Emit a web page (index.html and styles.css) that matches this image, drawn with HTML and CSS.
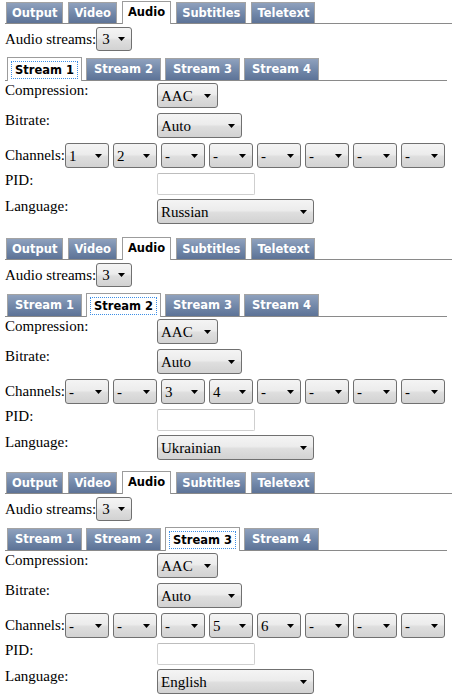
FILE: index.html
```html
<!DOCTYPE html>
<html>
<head>
<meta charset="utf-8">
<title>Audio settings</title>
<link rel="stylesheet" href="styles.css">
</head>
<body>
<div class="page">

  <section class="panel">
    <div class="tabs tabs-main">
      <span class="tab">Output</span>
      <span class="tab">Video</span>
      <span class="tab tab-active">Audio</span>
      <span class="tab">Subtitles</span>
      <span class="tab">Teletext</span>
    </div>
    <div class="count-row">
      <span class="inline-label">Audio streams:</span>
      <span class="sel sel-count"><span class="sel-text">3</span><svg class="arrow" viewBox="0 0 7 4"><polygon points="0,0 7,0 3.5,4"/></svg></span>
    </div>
    <div class="tabs tabs-stream">
      <span class="tab stab stab-active"><span class="focus">Stream 1</span></span>
      <span class="tab stab">Stream 2</span>
      <span class="tab stab">Stream 3</span>
      <span class="tab stab">Stream 4</span>
    </div>
    <div class="field">
      <span class="field-label">Compression:</span>
      <span class="sel sel-comp"><span class="sel-text">AAC</span><svg class="arrow" viewBox="0 0 7 4"><polygon points="0,0 7,0 3.5,4"/></svg></span>
    </div>
    <div class="field">
      <span class="field-label">Bitrate:</span>
      <span class="sel sel-rate"><span class="sel-text">Auto</span><svg class="arrow" viewBox="0 0 7 4"><polygon points="0,0 7,0 3.5,4"/></svg></span>
    </div>
    <div class="field field-channels">
      <span class="channels-label">Channels:</span>
      <div class="channels">
        <span class="sel sel-ch"><span class="sel-text">1</span><svg class="arrow" viewBox="0 0 7 4"><polygon points="0,0 7,0 3.5,4"/></svg></span>
        <span class="sel sel-ch"><span class="sel-text">2</span><svg class="arrow" viewBox="0 0 7 4"><polygon points="0,0 7,0 3.5,4"/></svg></span>
        <span class="sel sel-ch"><span class="sel-text">-</span><svg class="arrow" viewBox="0 0 7 4"><polygon points="0,0 7,0 3.5,4"/></svg></span>
        <span class="sel sel-ch"><span class="sel-text">-</span><svg class="arrow" viewBox="0 0 7 4"><polygon points="0,0 7,0 3.5,4"/></svg></span>
        <span class="sel sel-ch"><span class="sel-text">-</span><svg class="arrow" viewBox="0 0 7 4"><polygon points="0,0 7,0 3.5,4"/></svg></span>
        <span class="sel sel-ch"><span class="sel-text">-</span><svg class="arrow" viewBox="0 0 7 4"><polygon points="0,0 7,0 3.5,4"/></svg></span>
        <span class="sel sel-ch"><span class="sel-text">-</span><svg class="arrow" viewBox="0 0 7 4"><polygon points="0,0 7,0 3.5,4"/></svg></span>
        <span class="sel sel-ch"><span class="sel-text">-</span><svg class="arrow" viewBox="0 0 7 4"><polygon points="0,0 7,0 3.5,4"/></svg></span>
      </div>
    </div>
    <div class="field field-pid">
      <span class="field-label">PID:</span>
      <span class="pid-input"></span>
    </div>
    <div class="field field-last">
      <span class="field-label">Language:</span>
      <span class="sel sel-lang"><span class="sel-text">Russian</span><svg class="arrow" viewBox="0 0 7 4"><polygon points="0,0 7,0 3.5,4"/></svg></span>
    </div>
  </section>

  <section class="panel">
    <div class="tabs tabs-main">
      <span class="tab">Output</span>
      <span class="tab">Video</span>
      <span class="tab tab-active">Audio</span>
      <span class="tab">Subtitles</span>
      <span class="tab">Teletext</span>
    </div>
    <div class="count-row">
      <span class="inline-label">Audio streams:</span>
      <span class="sel sel-count"><span class="sel-text">3</span><svg class="arrow" viewBox="0 0 7 4"><polygon points="0,0 7,0 3.5,4"/></svg></span>
    </div>
    <div class="tabs tabs-stream">
      <span class="tab stab">Stream 1</span>
      <span class="tab stab stab-active"><span class="focus">Stream 2</span></span>
      <span class="tab stab">Stream 3</span>
      <span class="tab stab">Stream 4</span>
    </div>
    <div class="field">
      <span class="field-label">Compression:</span>
      <span class="sel sel-comp"><span class="sel-text">AAC</span><svg class="arrow" viewBox="0 0 7 4"><polygon points="0,0 7,0 3.5,4"/></svg></span>
    </div>
    <div class="field">
      <span class="field-label">Bitrate:</span>
      <span class="sel sel-rate"><span class="sel-text">Auto</span><svg class="arrow" viewBox="0 0 7 4"><polygon points="0,0 7,0 3.5,4"/></svg></span>
    </div>
    <div class="field field-channels">
      <span class="channels-label">Channels:</span>
      <div class="channels">
        <span class="sel sel-ch"><span class="sel-text">-</span><svg class="arrow" viewBox="0 0 7 4"><polygon points="0,0 7,0 3.5,4"/></svg></span>
        <span class="sel sel-ch"><span class="sel-text">-</span><svg class="arrow" viewBox="0 0 7 4"><polygon points="0,0 7,0 3.5,4"/></svg></span>
        <span class="sel sel-ch"><span class="sel-text">3</span><svg class="arrow" viewBox="0 0 7 4"><polygon points="0,0 7,0 3.5,4"/></svg></span>
        <span class="sel sel-ch"><span class="sel-text">4</span><svg class="arrow" viewBox="0 0 7 4"><polygon points="0,0 7,0 3.5,4"/></svg></span>
        <span class="sel sel-ch"><span class="sel-text">-</span><svg class="arrow" viewBox="0 0 7 4"><polygon points="0,0 7,0 3.5,4"/></svg></span>
        <span class="sel sel-ch"><span class="sel-text">-</span><svg class="arrow" viewBox="0 0 7 4"><polygon points="0,0 7,0 3.5,4"/></svg></span>
        <span class="sel sel-ch"><span class="sel-text">-</span><svg class="arrow" viewBox="0 0 7 4"><polygon points="0,0 7,0 3.5,4"/></svg></span>
        <span class="sel sel-ch"><span class="sel-text">-</span><svg class="arrow" viewBox="0 0 7 4"><polygon points="0,0 7,0 3.5,4"/></svg></span>
      </div>
    </div>
    <div class="field field-pid">
      <span class="field-label">PID:</span>
      <span class="pid-input"></span>
    </div>
    <div class="field field-last">
      <span class="field-label">Language:</span>
      <span class="sel sel-lang"><span class="sel-text">Ukrainian</span><svg class="arrow" viewBox="0 0 7 4"><polygon points="0,0 7,0 3.5,4"/></svg></span>
    </div>
  </section>

  <section class="panel">
    <div class="tabs tabs-main">
      <span class="tab">Output</span>
      <span class="tab">Video</span>
      <span class="tab tab-active">Audio</span>
      <span class="tab">Subtitles</span>
      <span class="tab">Teletext</span>
    </div>
    <div class="count-row">
      <span class="inline-label">Audio streams:</span>
      <span class="sel sel-count"><span class="sel-text">3</span><svg class="arrow" viewBox="0 0 7 4"><polygon points="0,0 7,0 3.5,4"/></svg></span>
    </div>
    <div class="tabs tabs-stream">
      <span class="tab stab">Stream 1</span>
      <span class="tab stab">Stream 2</span>
      <span class="tab stab stab-active"><span class="focus">Stream 3</span></span>
      <span class="tab stab">Stream 4</span>
    </div>
    <div class="field">
      <span class="field-label">Compression:</span>
      <span class="sel sel-comp"><span class="sel-text">AAC</span><svg class="arrow" viewBox="0 0 7 4"><polygon points="0,0 7,0 3.5,4"/></svg></span>
    </div>
    <div class="field">
      <span class="field-label">Bitrate:</span>
      <span class="sel sel-rate"><span class="sel-text">Auto</span><svg class="arrow" viewBox="0 0 7 4"><polygon points="0,0 7,0 3.5,4"/></svg></span>
    </div>
    <div class="field field-channels">
      <span class="channels-label">Channels:</span>
      <div class="channels">
        <span class="sel sel-ch"><span class="sel-text">-</span><svg class="arrow" viewBox="0 0 7 4"><polygon points="0,0 7,0 3.5,4"/></svg></span>
        <span class="sel sel-ch"><span class="sel-text">-</span><svg class="arrow" viewBox="0 0 7 4"><polygon points="0,0 7,0 3.5,4"/></svg></span>
        <span class="sel sel-ch"><span class="sel-text">-</span><svg class="arrow" viewBox="0 0 7 4"><polygon points="0,0 7,0 3.5,4"/></svg></span>
        <span class="sel sel-ch"><span class="sel-text">5</span><svg class="arrow" viewBox="0 0 7 4"><polygon points="0,0 7,0 3.5,4"/></svg></span>
        <span class="sel sel-ch"><span class="sel-text">6</span><svg class="arrow" viewBox="0 0 7 4"><polygon points="0,0 7,0 3.5,4"/></svg></span>
        <span class="sel sel-ch"><span class="sel-text">-</span><svg class="arrow" viewBox="0 0 7 4"><polygon points="0,0 7,0 3.5,4"/></svg></span>
        <span class="sel sel-ch"><span class="sel-text">-</span><svg class="arrow" viewBox="0 0 7 4"><polygon points="0,0 7,0 3.5,4"/></svg></span>
        <span class="sel sel-ch"><span class="sel-text">-</span><svg class="arrow" viewBox="0 0 7 4"><polygon points="0,0 7,0 3.5,4"/></svg></span>
      </div>
    </div>
    <div class="field field-pid">
      <span class="field-label">PID:</span>
      <span class="pid-input"></span>
    </div>
    <div class="field field-last">
      <span class="field-label">Language:</span>
      <span class="sel sel-lang"><span class="sel-text">English</span><svg class="arrow" viewBox="0 0 7 4"><polygon points="0,0 7,0 3.5,4"/></svg></span>
    </div>
  </section>

</div>
</body>
</html>
```

FILE: styles.css
```css
html, body {
  margin: 0;
  padding: 0;
  background: #ffffff;
}

body {
  font-family: "Liberation Serif", "Times New Roman", serif;
  font-size: 15px;
  color: #000000;
}

.page {
  padding: 1px 2px 0 5px;
}

.panel {
  margin-bottom: 13px;
}

.panel + .panel {
  margin-bottom: 11px;
}

/* ---------- tabs ---------- */
.tabs {
  display: flex;
  align-items: flex-end;
  border-bottom: 1px solid #8a8a8a;
}

.tabs-main {
  padding-left: 1px;
}

.tabs-stream {
  margin-top: 6px;
  margin-right: 5px;
  padding-left: 2px;
}

.tab {
  box-sizing: border-box;
  height: 21px;
  line-height: 20px;
  padding: 0 5px;
  margin-right: 5px;
  border: 1px solid #a3a3a3;
  border-bottom: 0;
  font-family: "DejaVu Sans", Verdana, sans-serif;
  font-weight: bold;
  font-size: 11.5px;
  color: #ffffff;
  white-space: nowrap;
  background: linear-gradient(#8fa1bd 0%, #7389aa 50%, #5d7397 100%);
}

.tab-active {
  height: 23px;
  margin-bottom: -1px;
  line-height: 21px;
  color: #000000;
  background: #ffffff;
  border-color: #9c9c9c;
}

.stab {
  height: 22px;
  line-height: 21px;
  padding: 0 7px;
  margin-right: 4px;
}

.stab-active {
  height: 24px;
  margin-bottom: -1px;
  padding: 0 4px;
  display: flex;
  align-items: center;
  color: #000000;
  background: #ffffff;
  border-color: #9c9c9c;
}

.focus {
  display: block;
  line-height: 16px;
  padding: 0 3px;
  outline: 1px dotted #3d8fe6;
  outline-offset: 0;
}

/* ---------- select look-alike ---------- */
.sel {
  box-sizing: border-box;
  display: inline-flex;
  align-items: center;
  justify-content: space-between;
  height: 25px;
  padding: 0 6px 0 3px;
  border: 1px solid #707070;
  border-radius: 3px;
  background: linear-gradient(#f4f4f4 0%, #ececec 45%, #dedede 55%, #d2d2d2 100%);
  font-family: "Liberation Serif", "Times New Roman", serif;
  font-size: 15px;
  line-height: 16px;
  white-space: nowrap;
}

.sel-text {
  display: block;
}

.arrow {
  width: 7px;
  height: 4px;
  flex: none;
  fill: #000000;
}

.sel-count { width: 36px; height: 24px; padding-left: 5px; }
.sel-comp { width: 61px; }
.sel-rate { width: 85px; }
.sel-ch { width: 44px; }
.sel-lang { width: 157px; }

/* ---------- rows ---------- */
.count-row {
  display: flex;
  align-items: baseline;
  margin-top: 3px;
}

.inline-label {
  line-height: 16px;
}

.field {
  display: flex;
  align-items: flex-start;
  margin-bottom: 4px;
}

.tabs-stream + .field {
  margin-top: 1px;
}

.field-label {
  width: 152px;
  flex: none;
  line-height: 16px;
}

.field .sel,
.pid-input {
  margin-top: 1px;
}

.channels-label {
  line-height: 25px;
  margin-top: 1px;
}

.channels {
  display: flex;
  gap: 4px;
}

.field-pid {
  margin-bottom: 3px;
}

.pid-input {
  box-sizing: border-box;
  display: block;
  width: 98px;
  height: 22px;
  border: 1px solid #cfcfcf;
  border-top-color: #bdbdbd;
  border-radius: 2px;
  background: #ffffff;
}

.field-last {
  margin-bottom: 0;
}
```
